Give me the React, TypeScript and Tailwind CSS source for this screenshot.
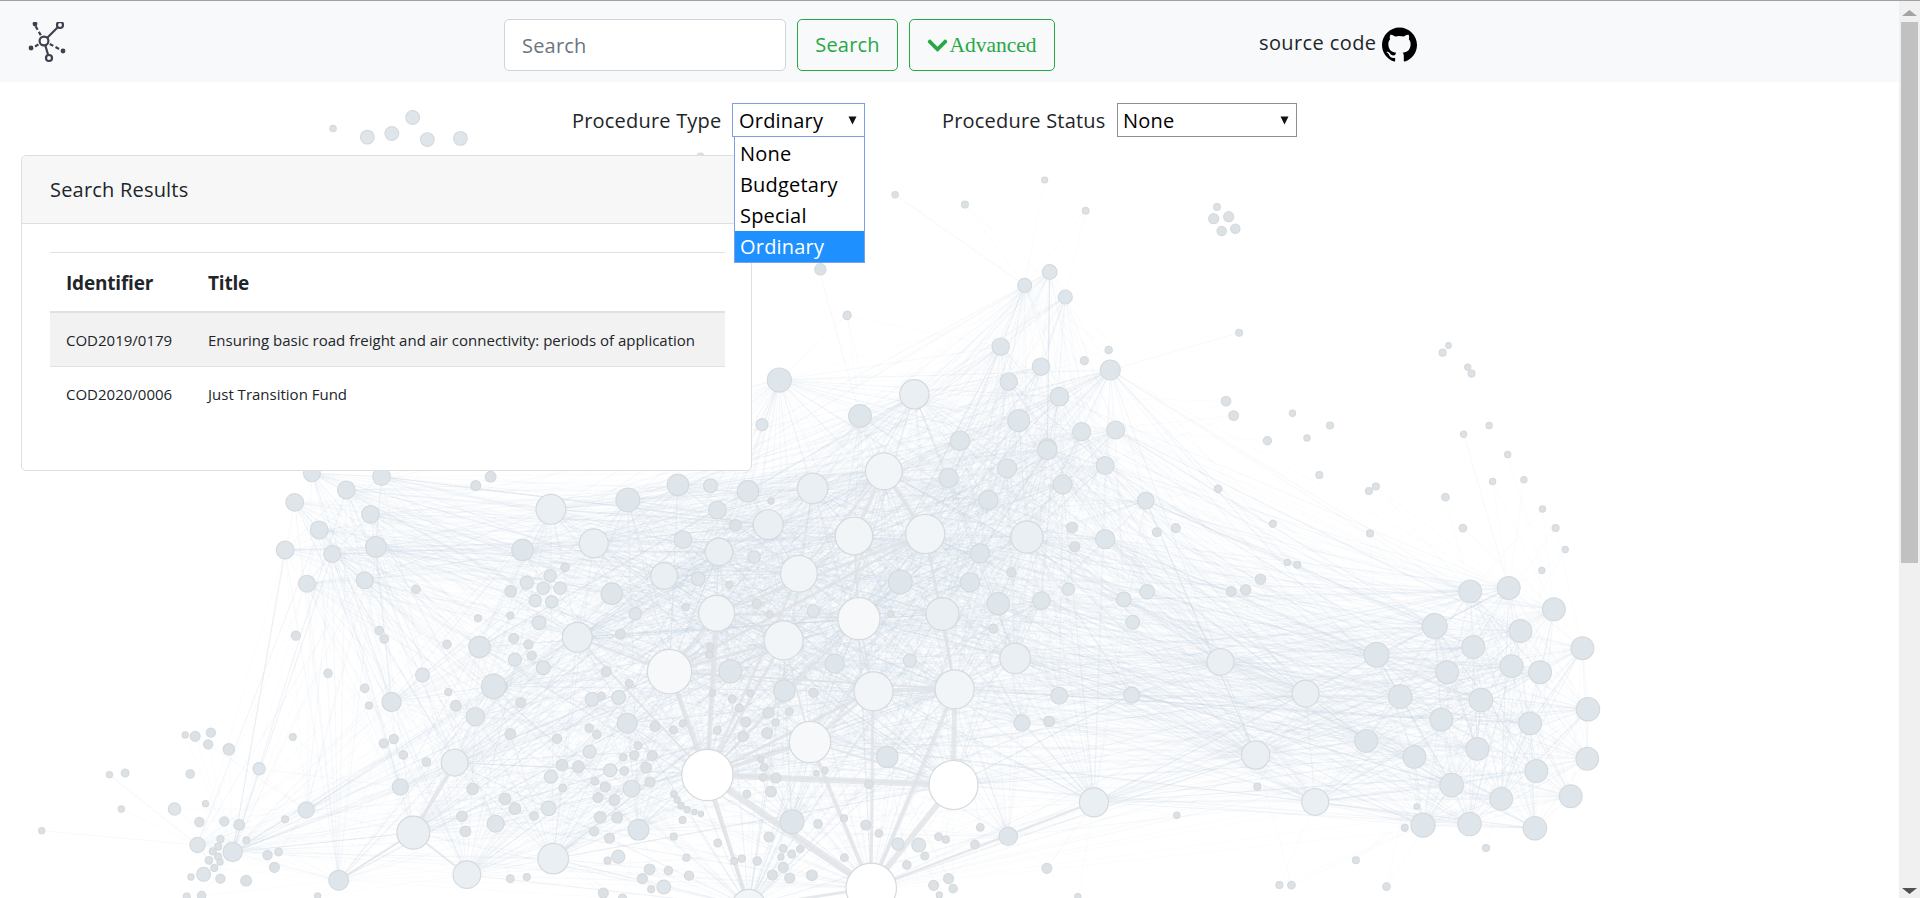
import { FaChevronDown } from 'react-icons/fa';
import { SiGithub } from 'react-icons/si';

type Node = { x: number; y: number; r: number };

// node positions read off crops of the reference, each crop with its own origin and scale
const toNodes = (ox: number, oy: number, sx: number, sy: number, list: number[][]): Node[] =>
  list.map(([x, y, r]) => ({ x: ox + x / sx, y: oy + y / sy, r: r / sx }));

const NODES: Node[] = [
  ...toNodes(0, 0, 1 / 1.2245, 1 / 1.2245, [
    [272, 105, 2.6], [300, 112, 5.6], [320, 109, 5.6], [337, 96, 5.6], [349, 114, 5.6], [376, 113, 5.6],
    [731, 159, 2.6], [788, 167, 2.8], [692, 257, 3], [669, 221, 2.6], [572, 128, 3],
  ]),
  ...toNodes(752, 250, 3, 3, [
    [205, 58, 17], [285, 197, 12], [818, 106, 21], [893, 66, 22], [940, 141, 21], [746, 290, 26], [867, 350, 26],
    [770, 395, 26], [997, 332, 12], [1070, 300, 11], [1075, 360, 30], [922, 440, 28], [82, 390, 36], [30, 524, 18],
    [324, 498, 34], [487, 433, 44], [800, 512, 33], [624, 572, 29], [989, 545, 27], [1091, 540, 27], [886, 594, 28],
  ]),
  ...toNodes(1040, 140, 3, 3, [
    [14, 120, 9], [137, 212, 10], [531, 201, 10], [521, 236, 15], [566, 230, 15], [545, 273, 14], [586, 266, 14],
  ]),
  ...toNodes(1100, 300, 2.904, 2.622, [
    [404, 86, 10], [1012, 119, 8], [995, 138, 10], [1068, 176, 9], [1079, 193, 10], [366, 265, 14], [388, 303, 14],
    [559, 297, 9], [668, 329, 10], [601, 362, 9], [486, 369, 12], [1130, 329, 9], [1056, 352, 9], [1184, 405, 9],
    [637, 459, 10], [343, 495, 11], [1140, 476, 9], [1231, 471, 9], [801, 489, 10], [781, 501, 10], [1003, 517, 11],
    [15, 434, 26], [133, 526, 24], [165, 609, 13], [220, 598, 13], [502, 587, 10], [784, 612, 10], [1054, 598, 11],
    [1285, 548, 9], [1323, 598, 10], [1351, 654, 9], [1283, 709, 9], [544, 688, 9], [573, 694, 10], [466, 732, 15],
    [423, 760, 15], [381, 764, 14], [137, 765, 21], [69, 785, 21], [95, 845, 20], [15, 627, 28], [1075, 764, 33],
    [1187, 755, 33], [1318, 811, 33], [972, 855, 36], [1221, 868, 33], [803, 930, 36], [1084, 910, 33], [1401, 913, 33],
    [350, 949, 39], [1008, 976, 33], [1195, 960, 33], [1278, 976, 33], [872, 1040, 34], [1106, 1049, 34], [597, 1032, 39],
    [1417, 1073, 34], [991, 1100, 33], [1249, 1110, 33], [92, 1036, 23], [773, 1156, 33], [1096, 1177, 33], [1415, 1203, 33],
    [913, 1198, 33], [1267, 1235, 33], [452, 1193, 41], [1021, 1272, 34], [1165, 1308, 33], [1367, 1301, 33], [625, 1316, 39],
    [457, 1276, 10], [223, 1351, 9], [920, 1328, 8], [885, 1384, 10], [938, 1377, 35], [1073, 1374, 34], [1263, 1385, 34],
    [1121, 1437, 10], [743, 1469, 10], [521, 1534, 10], [556, 1534, 11], [832, 1538, 11],
  ]),
  ...toNodes(500, 450, 2.613, 3, [
    [1003, 64, 48], [1172, 84, 25], [1325, 55, 25], [1470, 103, 25], [1430, 0, 25], [465, 105, 28], [550, 107, 18], [648, 124, 28],
    [817, 115, 40], [133, 178, 39], [334, 150, 31], [708, 153, 8], [568, 180, 23], [1276, 150, 25], [701, 224, 39], [615, 226, 15],
    [925, 258, 49], [1111, 252, 51], [245, 280, 38], [478, 269, 23], [59, 300, 28], [572, 306, 36], [664, 321, 16], [1377, 261, 42],
    [1495, 232, 14], [1502, 290, 13], [1254, 310, 25], [170, 352, 11], [131, 377, 16], [70, 398, 17], [113, 415, 16], [157, 415, 16],
    [28, 424, 15], [92, 452, 16], [135, 455, 16], [429, 378, 35], [518, 386, 18], [781, 371, 48], [1046, 396, 31], [1228, 397, 25],
    [1336, 367, 12], [599, 405, 9], [292, 431, 28], [1302, 461, 29], [1415, 452, 23], [1485, 417, 16], [566, 490, 47], [671, 461, 12],
    [485, 472, 9], [819, 483, 16], [705, 493, 9], [938, 506, 55], [1021, 492, 8], [1156, 492, 43], [354, 491, 16], [27, 497, 9],
    [102, 518, 18], [741, 571, 51], [1289, 536, 12], [202, 562, 39], [315, 552, 13], [36, 565, 13], [74, 583, 12], [83, 617, 12],
    [39, 629, 17], [113, 653, 18], [549, 590, 9], [547, 614, 9], [443, 665, 58], [602, 664, 30], [874, 641, 25], [1071, 632, 17],
    [1346, 625, 40], [278, 665, 13], [337, 700, 10], [5, 710, 15], [976, 724, 51], [1188, 718, 51], [743, 722, 28], [819, 728, 12],
    [555, 730, 8], [654, 730, 9], [241, 748, 18], [265, 738, 10], [310, 742, 18], [54, 758, 13], [607, 747, 10], [625, 774, 10],
    [1461, 737, 22], [701, 788, 14], [756, 785, 10], [332, 820, 26], [720, 817, 9], [642, 816, 13], [478, 820, 9], [405, 829, 13],
    [453, 840, 10], [233, 834, 11], [253, 854, 11], [27, 852, 14], [1364, 819, 21], [1435, 814, 14], [149, 866, 12], [568, 841, 10],
    [635, 860, 13], [698, 849, 14], [810, 876, 54], [361, 887, 10], [234, 905, 17], [351, 916, 12], [398, 917, 13], [322, 922, 9],
    [1012, 921, 28], [162, 945, 15], [205, 950, 15], [288, 961, 17], [325, 963, 11], [382, 953, 14], [682, 928, 8], [690, 952, 10],
    [827, 970, 7], [849, 961, 8], [133, 980, 17], [688, 982, 10], [721, 984, 13], [964, 1003, 11], [248, 994, 10], [392, 996, 13],
    [164, 1014, 10], [275, 1011, 13], [344, 1016, 22], [1185, 1005, 64], [542, 975, 67], [1552, 1057, 38], [645, 1032, 10], [708, 1025, 14],
    [13, 1047, 15], [256, 1043, 13], [299, 1050, 14], [454, 1032, 8], [463, 1050, 8], [473, 1067, 8], [489, 1079, 8], [508, 1086, 7],
    [525, 1091, 7], [39, 1076, 15], [127, 1075, 19], [89, 1098, 11], [262, 1102, 15], [306, 1103, 14], [477, 1110, 9], [763, 1115, 31],
    [831, 1122, 11], [899, 1105, 9], [956, 1125, 13], [1255, 1132, 10], [3, 1120, 8], [362, 1139, 27], [246, 1144, 12], [990, 1150, 10],
    [1328, 1159, 24], [703, 1161, 13], [286, 1164, 13], [454, 1160, 9], [1146, 1160, 10], [1165, 1169, 9], [569, 1179, 10], [1040, 1182, 16],
    [1094, 1185, 18], [1241, 1184, 11], [139, 1226, 40], [309, 1220, 17], [487, 1223, 9], [740, 1195, 10], [762, 1212, 10], [784, 1197, 9],
    [734, 1221, 8], [612, 1233, 9], [632, 1226, 9], [672, 1233, 11], [1110, 1218, 10], [900, 1223, 10], [281, 1232, 9], [1063, 1245, 11],
    [1429, 1255, 13], [391, 1258, 14], [440, 1262, 11], [740, 1252, 13], [27, 1286, 10], [70, 1281, 9], [372, 1286, 13], [494, 1277, 12],
    [712, 1275, 13], [757, 1284, 13], [815, 1276, 14], [1172, 1286, 13], [1133, 1306, 13], [1184, 1316, 11], [428, 1311, 18], [395, 1318, 9],
    [270, 1329, 13], [970, 1315, 66], [650, 1370, 45], [1148, 1335, 8], [1510, 1340, 8], [320, 1344, 10],
  ]),
  ...toNodes(0, 450, 2.613, 3, [
    [815, 70, 22], [997, 80, 23], [905, 120, 23], [1243, 107, 13], [1282, 80, 14], [770, 157, 23], [968, 193, 23], [834, 240, 23],
    [982, 291, 27], [745, 300, 23], [868, 312, 22], [802, 401, 22], [953, 391, 22], [1087, 418, 11], [1249, 505, 9], [773, 557, 12],
    [991, 542, 11], [1004, 567, 11], [1168, 583, 11], [1253, 591, 28], [857, 670, 11], [1104, 675, 18], [1290, 709, 32], [953, 715, 11],
    [1171, 726, 9], [964, 767, 9], [1023, 756, 25], [1191, 767, 14], [1242, 800, 24], [484, 855, 8], [510, 859, 13], [551, 848, 12],
    [544, 883, 12], [598, 898, 15], [765, 861, 9], [1003, 880, 12], [1029, 867, 12], [1054, 915, 11], [1114, 936, 11], [1188, 938, 35],
    [286, 974, 8], [327, 969, 10], [497, 972, 11], [677, 956, 16], [1046, 1011, 21], [1235, 1017, 15], [537, 1061, 8], [317, 1077, 8],
    [456, 1077, 16], [800, 1080, 21], [1207, 1099, 14], [1216, 1144, 14], [1295, 1121, 22], [521, 1116, 12], [586, 1114, 12], [625, 1124, 14],
    [745, 1108, 9], [109, 1142, 8], [1080, 1148, 43], [576, 1167, 9], [644, 1171, 9], [516, 1185, 20], [570, 1190, 9], [556, 1204, 9],
    [608, 1206, 25], [699, 1215, 12], [728, 1206, 10], [570, 1220, 9], [575, 1236, 8], [546, 1231, 10], [560, 1254, 9], [717, 1252, 13],
    [532, 1273, 18], [576, 1286, 12], [499, 1281, 8], [643, 1292, 14], [885, 1291, 26], [1220, 1274, 36], [488, 1340, 9], [527, 1337, 11],
    [830, 1338, 8],
  ]),
];

// hubs for the heavy edges
const HUB: Record<string, [number, number]> = {
  A: [707, 775], B: [953, 785], C: [871, 888], D: [670, 672], E: [749, 907], F: [810, 742], G: [873, 691],
  H: [955, 689], I: [784, 640], J: [859, 619], K: [717, 613], L: [799, 574], M: [854, 536], N: [925, 534],
  O: [884, 471], P: [942, 614], Q: [1094, 802], R: [577, 637], S: [413, 833], T: [455, 763], U: [339, 880],
  V: [467, 875], W: [233, 852],
};

const HEAVY: [string, string, number][] = [
  ['A', 'C', 7], ['A', 'B', 6], ['A', 'D', 5], ['A', 'E', 4], ['B', 'C', 6], ['B', 'H', 5], ['C', 'G', 3], ['C', 'F', 4],
  ['C', 'E', 3], ['A', 'K', 5], ['A', 'I', 3], ['A', 'L', 3], ['A', 'J', 2], ['K', 'N', 3], ['D', 'K', 4], ['D', 'I', 3],
  ['D', 'N', 3], ['H', 'P', 3], ['H', 'N', 2], ['F', 'G', 3], ['O', 'M', 4], ['O', 'N', 4], ['O', 'L', 2], ['N', 'P', 2],
  ['M', 'J', 2], ['C', 'H', 4], ['G', 'H', 4], ['D', 'R', 2], ['R', 'A', 2], ['S', 'T', 4], ['Q', 'C', 2], ['F', 'A', 4],
  ['I', 'F', 2], ['G', 'J', 2], ['D', 'H', 2], ['K', 'I', 2], ['B', 'F', 2], ['A', 'G', 3], ['E', 'D', 2], ['K', 'J', 2],
  ['S', 'U', 2], ['S', 'V', 2],
];

function seeded(seed: number) {
  let s = seed;
  return () => {
    s = (s * 1664525 + 1013904223) % 4294967296;
    return s / 4294967296;
  };
}

function buildEdges(): string[] {
  const rand = seeded(20201);
  const buckets: string[] = Array.from({ length: 60 }, () => '');
  NODES.forEach((n) => {
    const small = n.r < 7;
    const want = small ? 2 : Math.floor(n.r * n.r * 0.3) + 2;
    let found = 0;
    for (let t = 0; t < 400 && found < want; t++) {
      const m = NODES[Math.floor(rand() * NODES.length)];
      const d = Math.hypot(m.x - n.x, m.y - n.y);
      if (d < 2 || d > (small ? 170 : 130 + n.r * 32)) continue;
      if (m.r < 7 || rand() > m.r / 14) continue;
      const b = Math.floor(rand() * buckets.length);
      buckets[b] += `M${n.x.toFixed(1)} ${n.y.toFixed(1)}L${m.x.toFixed(1)} ${m.y.toFixed(1)}`;
      found++;
    }
  });
  return buckets;
}

const EDGES = buildEdges();

function nodeFill(r: number) {
  if (r >= 23) return '#ffffff';
  if (r >= 20) return '#f6f8fa';
  if (r >= 17) return '#f1f5f7';
  if (r >= 13) return '#e9eff2';
  if (r >= 6) return '#dfe6eb';
  return '#dce1e5';
}

function NetworkGraph() {
  return (
    <svg className="absolute left-0 top-0" width={1899} height={898} viewBox="0 0 1899 898">
      {EDGES.map((d, i) => (
        <path key={i} d={d} fill="none" stroke="#c8dbe2" strokeWidth={1.1} strokeOpacity={0.07} />
      ))}
      {HEAVY.map(([a, b, w], i) => (
        <line
          key={i}
          x1={HUB[a][0]}
          y1={HUB[a][1]}
          x2={HUB[b][0]}
          y2={HUB[b][1]}
          stroke="#dfe2e5"
          strokeWidth={w}
          strokeOpacity={0.75}
        />
      ))}
      {NODES.map((n, i) => (
        <circle key={i} cx={n.x} cy={n.y} r={n.r} fill={nodeFill(n.r)} stroke="#d6dadd" strokeWidth={1.2} />
      ))}
    </svg>
  );
}

function Logo() {
  return (
    <svg width="48" height="48" viewBox="0 0 48 48" fill="none" stroke="#3f3f4e" strokeWidth="2.2">
      <path d="M19 19L10 3" strokeDasharray="4 2.5" />
      <path d="M19 19L6 27" strokeDasharray="4 2.5" />
      <path d="M19 19L38 29" strokeDasharray="4 2.5" />
      <path d="M19 19L35 3" />
      <path d="M19 19L24 36" />
      <circle cx="10" cy="2" r="2.4" fill="#3f3f4e" stroke="none" />
      <circle cx="6" cy="26" r="2.4" fill="#3f3f4e" stroke="none" />
      <circle cx="38" cy="29" r="2.4" fill="#3f3f4e" stroke="none" />
      <circle cx="19" cy="19" r="4.4" fill="#f8f9fa" />
      <circle cx="35" cy="3" r="3" fill="#f8f9fa" />
      <circle cx="24" cy="36" r="3" fill="#f8f9fa" />
    </svg>
  );
}

function SelectArrow() {
  return (
    <svg width="9" height="9" viewBox="0 0 9 9" className="absolute right-[7px] top-[12px]">
      <polygon points="0.5,0.5 8.5,0.5 4.5,8.5" fill="#111" />
    </svg>
  );
}

const sans = 'font-["Open_Sans",sans-serif]';

export default function App() {
  return (
    <div className={`relative flex h-[898px] w-full overflow-hidden bg-white text-[#212529] ${sans}`}>
      <div className="relative h-full w-[1899px] shrink-0 overflow-hidden">
        <NetworkGraph />

        {/* NAVBAR */}
        <nav className="relative flex h-[82px] items-start border-t border-[#a0a0a0] bg-[#f8f9fa]">
          <div className="ml-[25px] mt-[21px] w-[48px]">
            <Logo />
          </div>
          <input
            placeholder="Search"
            className="ml-[431px] mt-[18px] h-[52px] w-[282px] rounded-[5px] border border-[#ced4da] bg-white px-[17px] text-[20px] tracking-[0.01em] outline-none placeholder:text-[#6c757d]"
          />
          <button className="ml-[11px] mt-[18px] h-[52px] w-[101px] rounded-[5px] border border-[#28a745] text-[20px] tracking-[0.01em] text-[#28a745]">
            Search
          </button>
          <button className='ml-[11px] mt-[18px] flex h-[52px] w-[146px] items-center justify-center rounded-[5px] border border-[#28a745] font-["Liberation_Serif",serif] text-[21.5px] text-[#28a745]'>
            <FaChevronDown className="-ml-[1px] h-[23px] w-[23px]" />
            Advanced
          </button>
          <span className="ml-[204px] mt-[28px] text-[20px] leading-[28px] tracking-[0.02em]">source code</span>
          <SiGithub className="ml-[5px] mt-[26px] h-[35px] w-[35px] text-black" />
        </nav>

        {/* FILTERS */}
        <div className="relative z-10 mt-[21px] flex h-[34px] items-center pl-[572px]">
          <label className="mt-[2px] w-[160px] text-[20px] tracking-[0.01em]">Procedure Type</label>
          <div className="relative h-[34px] w-[133px] border-[1.5px] border-[#7a9fe6] bg-white text-[20px] leading-[34px] tracking-[0.01em] text-black">
            <span className="pl-[6px]">Ordinary</span>
            <SelectArrow />
            <ul className="absolute left-[1px] top-[32px] w-[131px] border border-[#7a9fe6] bg-white pt-[1px] leading-[32px]">
              <li className="h-[31px] pl-[5px]">None</li>
              <li className="h-[31px] pl-[5px]">Budgetary</li>
              <li className="h-[31px] pl-[5px]">Special</li>
              <li className="h-[31px] bg-[#1e90ff] pl-[5px] text-white">Ordinary</li>
            </ul>
          </div>
          <label className="ml-[77px] mt-[2px] w-[175px] text-[20px] tracking-[0.01em]">Procedure Status</label>
          <div className="relative h-[34px] w-[180px] border border-[#8f8f8f] bg-white pl-[5px] text-[20px] leading-[34px] tracking-[0.01em] text-black">
            None
            <SelectArrow />
          </div>
        </div>

        {/* SEARCH RESULTS CARD */}
        <div className="relative ml-[21px] mt-[18px] h-[316px] w-[731px] overflow-hidden rounded-[5px] border border-[#dfdfdf] bg-white">
          <div className="flex h-[68px] items-center border-b border-[#dfdfdf] bg-[#f7f7f7] px-[28px] text-[20px] tracking-[0.01em]">
            Search Results
          </div>
          <div className="pb-[28px] pl-[28px] pr-[26px] pt-[28px]">
            <table className="w-full border-collapse text-left">
              <thead>
                <tr className="h-[59px] border-y border-b-2 border-t-[#dee2e6] border-b-[#dee2e6] text-[19px] tracking-[-0.01em]">
                  <th className="w-[142px] pl-[16px] pt-[3px] font-bold">Identifier</th>
                  <th className="pl-[16px] pt-[3px] font-bold">Title</th>
                </tr>
              </thead>
              <tbody className="text-[15px]">
                <tr className="h-[55px] border-b border-[#dee2e6] bg-[#f2f2f2]">
                  <td className="pl-[16px] pt-[1px]">COD2019/0179</td>
                  <td className="pl-[16px] pt-[1px]">Ensuring basic road freight and air connectivity: periods of application</td>
                </tr>
                <tr className="h-[54px]">
                  <td className="pl-[16px]">COD2020/0006</td>
                  <td className="pl-[16px]">Just Transition Fund</td>
                </tr>
              </tbody>
            </table>
          </div>
        </div>
      </div>

      {/* SCROLLBAR */}
      <div className="flex h-full w-[21px] flex-col items-center border-t border-[#a0a0a0] bg-[#f0f0f0]">
        <svg width="15" height="6" viewBox="0 0 15 6" className="mt-[9px]">
          <polygon points="7.5,0 15,6 0,6" fill="#a3a3a3" />
        </svg>
        <div className="mt-[6px] h-[541px] w-[17px] bg-[#c1c1c1]" />
        <svg width="15" height="6" viewBox="0 0 15 6" className="mt-[325px]">
          <polygon points="0,0 15,0 7.5,6" fill="#505050" />
        </svg>
      </div>
    </div>
  );
}
